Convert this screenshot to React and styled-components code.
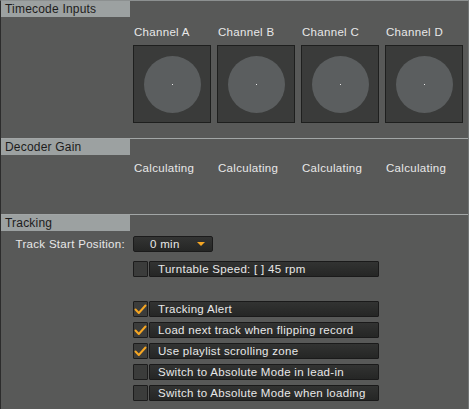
import React from 'react';
import styled, {createGlobalStyle} from 'styled-components';

const GlobalStyle = createGlobalStyle`
  html, body {
    margin: 0;
    padding: 0;
    background: #585958;
  }
  body {
    font-family: "Liberation Sans", Arial, sans-serif;
    font-size: 11px;
  }
`;

const channels = ['A', 'B', 'C', 'D'];

const options = [
    {label: 'Tracking Alert', checked: true},
    {label: 'Load next track when flipping record', checked: true},
    {label: 'Use playlist scrolling zone', checked: true},
    {label: 'Switch to Absolute Mode in lead-in', checked: false},
    {label: 'Switch to Absolute Mode when loading', checked: false},
];

const Check = () => (
    <svg width="13" height="11" viewBox="0 0 13 11">
        <path d="M1.5 5.5 L4.8 9 L11.5 1.5" fill="none" stroke="#f5a623" strokeWidth="2"
              strokeLinecap="round" strokeLinejoin="round"/>
    </svg>
);

const CheckRow = ({label, checked}) => (
    <Row>
        <Box>{checked && <Check/>}</Box>
        <Bar>{label}</Bar>
    </Row>
);

const App = () => {
    return <Frame>
        <GlobalStyle/>

        <Section>
            <Header>Timecode Inputs</Header>
            <ChannelBody>
                {channels.map(c => (
                    <Channel key={c}>
                        <Label>Channel {c}</Label>
                        <Scope>
                            <Disc><Dot/></Disc>
                        </Scope>
                    </Channel>
                ))}
            </ChannelBody>
        </Section>

        <Section>
            <Header>Decoder Gain</Header>
            <GainBody>
                {channels.map(c => <Gain key={c}>Calculating</Gain>)}
            </GainBody>
        </Section>

        <Section last>
            <Header>Tracking</Header>
            <TrackingBody>
                <FieldRow>
                    <FieldLabel>Track Start Position:</FieldLabel>
                    <Dropdown>
                        <span>0 min</span>
                        <Arrow/>
                    </Dropdown>
                </FieldRow>
                <Options>
                    <CheckRow label={'Turntable Speed: [ ] 45 rpm'} checked={false}/>
                </Options>
                <Options spaced>
                    {options.map(o => <CheckRow key={o.label} {...o}/>)}
                </Options>
            </TrackingBody>
        </Section>
    </Frame>;
}

const Frame = styled.div`
  width: 469px;
  height: 409px;
  box-sizing: border-box;
  border-top: 1px solid #8c9090;
  border-left: 1px solid #2c2c2c;
  border-right: 1px solid #727676;
  background: #585958;
  overflow: hidden;
  color: #e8e8e8;
`

const Section = styled.section`
  border-bottom: ${p => p.last ? 'none' : '1px solid #a2a6a6'};
`

const Header = styled.div`
  width: 125px;
  height: 16px;
  line-height: 16px;
  padding-left: 4px;
  background: #9ca1a1;
  color: #1c1c1c;
  font-size: 12px;
  letter-spacing: 0.2px;
`

const ChannelBody = styled.div`
  display: flex;
  gap: 6px;
  padding: 8px 0 15px 132px;
`

const Channel = styled.div`
  display: flex;
  flex-direction: column;
  gap: 6px;
`

const Label = styled.div`
  height: 14px;
  line-height: 14px;
  padding-left: 1px;
  font-size: 11.5px;
  letter-spacing: 0.3px;
`

const Scope = styled.div`
  width: 76px;
  height: 76px;
  background: #3a3b3a;
  border: 1px solid #1e1f1e;
  display: flex;
  align-items: center;
  justify-content: center;
`

const Disc = styled.div`
  width: 57px;
  height: 57px;
  border-radius: 50%;
  background: #5b5e5f;
  display: flex;
  align-items: center;
  justify-content: center;
`

const Dot = styled.div`
  width: 1px;
  height: 1px;
  background: #e8e8e8;
`

const GainBody = styled.div`
  display: flex;
  gap: 6px;
  height: 59px;
  padding: 7px 0 0 133px;
  box-sizing: border-box;
`

const Gain = styled.div`
  width: 78px;
  font-size: 11.5px;
  letter-spacing: 0.3px;
`

const TrackingBody = styled.div`
  padding: 5px 0 0 132px;
`

const FieldRow = styled.div`
  position: relative;
  display: flex;
  height: 16px;
`

const FieldLabel = styled.div`
  position: absolute;
  right: calc(100% + 8px);
  white-space: nowrap;
  line-height: 16px;
  font-size: 11.5px;
  letter-spacing: 0.3px;
`

const Dropdown = styled.div`
  width: 76px;
  height: 14px;
  border: 1px solid #1b1b1b;
  border-radius: 2px;
  background: linear-gradient(#333433, #252625);
  display: flex;
  align-items: center;
  padding-left: 2px;
  box-sizing: content-box;
  font-size: 11.5px;
  letter-spacing: 0.3px;
  span {
    flex: 1;
    padding-left: 14px;
  }
`

const Arrow = styled.div`
  width: 0;
  height: 0;
  margin-right: 7px;
  border-left: 4px solid transparent;
  border-right: 4px solid transparent;
  border-top: 4px solid #f5a623;
`

const Options = styled.div`
  display: flex;
  flex-direction: column;
  gap: 5px;
  margin-top: ${p => p.spaced ? 24 : 9}px;
`

const Row = styled.div`
  display: flex;
  gap: 1px;
  height: 16px;
  width: 246px;
`

const Box = styled.div`
  width: 13px;
  height: 14px;
  border: 1px solid #1c1c1c;
  border-radius: 1px;
  background: #3b3c3b;
  display: flex;
  align-items: center;
  justify-content: center;
`

const Bar = styled.div`
  flex: 1;
  border: 1px solid #1a1a1a;
  border-radius: 1px;
  background: linear-gradient(#323332, #252625);
  line-height: 14px;
  padding-left: 8px;
  font-size: 11.5px;
  letter-spacing: 0.3px;
  white-space: nowrap;
`

export default App;
